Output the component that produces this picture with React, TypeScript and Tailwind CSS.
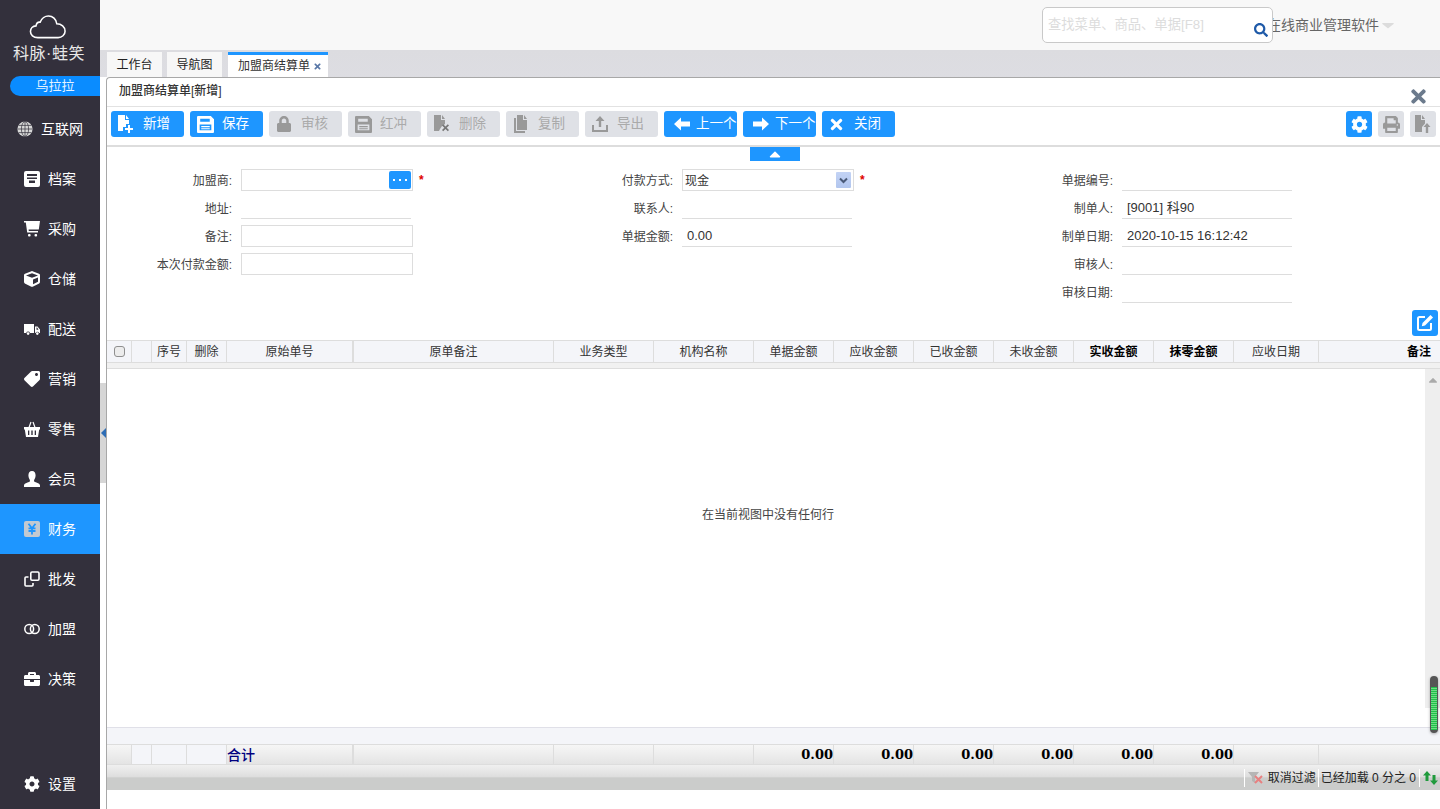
import type { ReactNode } from "react";
import { FaCube, FaTag, FaBriefcase, FaCog, FaLock, FaTimes, FaPrint, FaSearch, FaCaretDown, FaCaretUp } from "react-icons/fa";

const GlobeIcon = () => (
  <svg width="16" height="16" viewBox="0 0 16 16" fill="none">
    <circle cx="8" cy="8" r="7.6" fill="#d8d8d8" />
    <ellipse cx="8" cy="8" rx="3.6" ry="7.4" stroke="#33303c" strokeWidth="0.7" />
    <path d="M8 .6v14.8M.6 8h14.8M1.6 4.4h12.8M1.6 11.6h12.8" stroke="#33303c" strokeWidth="0.7" />
  </svg>
);

const ArchiveIcon = () => (
  <svg width="16" height="16" viewBox="0 0 16 16">
    <path
      fill="#fff"
      fillRule="evenodd"
      d="M2 0h12a2 2 0 0 1 2 2v12a2 2 0 0 1-2 2H2a2 2 0 0 1-2-2V2a2 2 0 0 1 2-2zM3 3v2h10V3zm0 3.5V8h10V6.500zM5 9.500V12h6V9.500z"
    />
  </svg>
);

const CartIcon = () => (
  <svg width="16" height="16" viewBox="0 0 16 16" fill="#fff">
    <path d="M0 0h16l-1.2 8.500H4.600l.2 1.500H14v1.600H3.200L1.800 1.600H0z" />
    <rect x="4" y="13" width="2.600" height="2.600" rx="1" />
    <rect x="10.500" y="13" width="2.600" height="2.600" rx="1" />
  </svg>
);

const TruckIcon = () => (
  <svg width="16" height="16" viewBox="0 0 16 16" fill="#fff">
    <path d="M0 3h10v9H6a2 2 0 0 0-3.800 0H0z" />
    <path fillRule="evenodd" d="M11 5.500h2.500L16 8.500V12h-.8a2 2 0 0 0-3.700 0H11zM12.500 6.500v2.200h2l-1.400-2.200z" />
    <circle cx="4.100" cy="12.600" r="1.300" />
    <circle cx="13.300" cy="12.600" r="1.300" />
  </svg>
);

const BasketIcon = () => (
  <svg width="16" height="16" viewBox="0 0 16 16">
    <path d="M5 6.500 7 1M11 6.500 9 1" fill="none" stroke="#fff" strokeWidth="1.200" />
    <path
      fill="#fff"
      fillRule="evenodd"
      d="M0 6h16v2.500h-.8L14 16H2L.8 8.500H0zM4 9.500V14h1.300V9.500zM7.300 9.500V14h1.400V9.500zM10.700 9.500V14H12V9.500z"
    />
  </svg>
);

const UserIcon = () => (
  <svg width="16" height="16" viewBox="0 0 16 16" fill="#fff">
    <path d="M8 0c2.500 0 3.600 2 3.600 4.500S10 8.500 10 10c0 1.500 6 1.800 6 4.500V16H0v-1.500C0 11.800 6 11.500 6 10 6 8.500 4.400 7 4.400 4.500S5.500 0 8 0z" />
  </svg>
);

const YenIcon = () => (
  <svg width="16" height="16" viewBox="0 0 16 16">
    <rect width="16" height="16" rx="2" fill="#c2c9d1" />
    <path d="M4.500 2.800 8 7.200l3.500-4.400M4.500 7.400h7M4.500 10h7M8 7.200v6.400" fill="none" stroke="#1e96ff" strokeWidth="1.800" />
  </svg>
);

const BatchIcon = () => (
  <svg width="16" height="16" viewBox="0 0 16 16" fill="none" stroke="#fff" strokeWidth="1.600">
    <rect x="6.800" y="1" width="8.200" height="8.200" rx="1.200" />
    <path d="M4.500 6H2a1 1 0 0 0-1 1v7a1 1 0 0 0 1 1h6a1 1 0 0 0 1-1v-2" />
  </svg>
);

const RingsIcon = () => (
  <svg width="16" height="16" viewBox="0 0 16 16" fill="none" stroke="#fff" strokeWidth="1.500">
    <circle cx="5.200" cy="8" r="4.400" />
    <circle cx="10.800" cy="8" r="4.400" />
  </svg>
);

const FilePlusIcon = () => (
  <svg width="18" height="18" viewBox="0 0 18 18" fill="#fff">
    <path d="M1 0h7v5h4v4H9v3H6v4H1z" />
    <path d="M9 0l3 4H9z" />
    <path d="M11 10h2v3h3v2h-3v3h-2v-3H8v-2h3z" />
  </svg>
);

const FileXIcon = () => (
  <svg width="18" height="18" viewBox="0 0 18 18" fill="#999">
    <path d="M1 0h7v5h4v4l-3 2-2 3-1 2H1z" />
    <path d="M9 0l3 4H9z" />
    <path d="M9 10.500l1.200-1.200 2.300 2.300 2.300-2.300 1.200 1.200-2.300 2.300 2.300 2.300-1.200 1.200-2.300-2.300-2.300 2.300L9 15.100l2.300-2.300z" fill="#777" />
  </svg>
);

const SaveIcon = ({ color }: { color: string }) => (
  <svg width="17" height="17" viewBox="0 0 16 16">
    <path
      fill={color}
      fillRule="evenodd"
      d="M1 0h12l3 3v12a1 1 0 0 1-1 1H1a1 1 0 0 1-1-1V1a1 1 0 0 1 1-1zM3 2.500V5.500h9V2.500zM2.500 8v5.500h11V8zM4 9.500h8v1H4zM4 11.500h8v1H4z"
    />
  </svg>
);

const CopyIcon = () => (
  <svg width="16" height="18" viewBox="0 0 16 18" fill="#999">
    <path d="M4 0h6v5h4v10H4z" />
    <path d="M11 0l3 4h-3z" />
    <path d="M1 3h2v13h9v2H1z" />
  </svg>
);

const UploadIcon = () => (
  <svg width="18" height="18" viewBox="0 0 18 18" fill="#999">
    <path d="M9 1l4.500 5H10.200v6H7.800V6H4.500z" />
    <path d="M1 10h2v5h12v-5h2v7H1z" />
  </svg>
);

const ArrowLeft = () => (
  <svg width="16" height="14" viewBox="0 0 16 14" fill="#fff" className="ml-[6px]">
    <path d="M0 7 7 .5v4h9v5H7v4z" />
  </svg>
);

const ArrowRight = () => (
  <svg width="16" height="14" viewBox="0 0 16 14" fill="#fff" className="ml-[6px]">
    <path d="M16 7 9 .5v4H0v5h9v4z" />
  </svg>
);

const FileUpIcon = () => (
  <svg width="18" height="18" viewBox="0 0 18 18" fill="#999">
    <path d="M1 0h6v5h4v3.500L8 12v5H1z" />
    <path d="M8 0l3 4H8z" />
    <path d="M13 8l3.500 4h-2.300v6h-2.400v-6H9.500z" />
  </svg>
);

const EditIcon = () => (
  <svg width="18" height="18" viewBox="0 0 18 18" fill="none">
    <path d="M9 3H3.500A1.500 1.500 0 0 0 2 4.500v10A1.500 1.500 0 0 0 3.500 16h10a1.500 1.500 0 0 0 1.500-1.500V9" stroke="#fff" strokeWidth="2" />
    <path d="M14.500 1 17 3.500 9 11.500l-3.200.7.700-3.200z" fill="#fff" />
  </svg>
);

const CloudLogo = () => (
  <svg width="38" height="24" viewBox="0 0 40 26" fill="none" stroke="#fff" strokeWidth="1.700" className="mr-[4px]">
    <path d="M9 24.500C4 24.500 1 21.500 1 18c0-3.500 2.500-6 6-6.200C7.500 9 9.500 7.500 11.500 7.800 13 3.500 17 1 20.500 1c4.500 0 8.500 3.500 9 8.500 5 0 9 3.500 9 8 0 4-3.500 7-7.500 7z" />
  </svg>
);

const menu: { label: string; icon: ReactNode; active?: boolean; wide?: boolean }[] = [
  { label: "互联网", icon: <GlobeIcon />, wide: true },
  { label: "档案", icon: <ArchiveIcon /> },
  { label: "采购", icon: <CartIcon /> },
  { label: "仓储", icon: <FaCube size={16} color="#fff" /> },
  { label: "配送", icon: <TruckIcon /> },
  { label: "营销", icon: <FaTag size={16} color="#fff" className="-scale-x-100" /> },
  { label: "零售", icon: <BasketIcon /> },
  { label: "会员", icon: <UserIcon /> },
  { label: "财务", icon: <YenIcon />, active: true },
  { label: "批发", icon: <BatchIcon /> },
  { label: "加盟", icon: <RingsIcon /> },
  { label: "决策", icon: <FaBriefcase size={16} color="#fff" /> },
];

const MenuItem = ({ label, icon, active, wide }: { label: string; icon: ReactNode; active?: boolean; wide?: boolean }) => (
  <div
    className={`flex h-[50px] items-center gap-[8px] text-[14px] text-white ${wide ? "pl-[17px]" : "pl-[24px]"} ${
      active ? "bg-[#1e96ff]" : ""
    }`}
  >
    <span className="flex h-[16px] w-[16px] items-center justify-center">{icon}</span>
    <span className="leading-none">{label}</span>
  </div>
);

const Sidebar = () => (
  <aside className="flex w-[100px] shrink-0 flex-col bg-[#33303c]">
    <div className="flex h-[76px] flex-col items-center pt-[15px]">
      <CloudLogo />
      <div className="mr-[2px] mt-[5px] whitespace-nowrap text-[16px] leading-[20px] tracking-[0.5px] text-[#e8e8e8]">科脉·蛙笑</div>
    </div>
    <div className="ml-[10px] flex h-[20px] items-center justify-center rounded-l-[10px] bg-[#0a8cff] text-[13px] text-[#e6f3ff]">乌拉拉</div>
    <div className="mt-[8px] flex-1">
      {menu.map((m) => (
        <MenuItem key={m.label} {...m} />
      ))}
    </div>
    <MenuItem label="设置" icon={<FaCog size={16} color="#fff" />} />
  </aside>
);

const TopBar = () => (
  <div className="flex h-[50px] shrink-0 items-center justify-end bg-[#f8f8f8] pr-[44px]">
    <div className="relative z-10 -mr-[6px] flex h-[36px] w-[231px] items-center rounded-[5px] border border-[#c9c9c9] bg-white pl-[5px] text-[13.300px] text-[#dcdcdc]">
      查找菜单、商品、单据[F8]
      <FaSearch size={14} color="#1f5aa8" className="absolute right-[4px] top-[15px]" />
    </div>
    <span className="whitespace-nowrap text-[14px] text-[#666]">在线商业管理软件</span>
    <FaCaretDown size={16} color="#dcdcdc" className="ml-[1px] scale-x-125" />
  </div>
);

const TabStrip = () => (
  <div className="flex h-[27px] shrink-0 items-end bg-gradient-to-b from-[#dcdce0] to-[#dddde2] pl-[7px] text-[12px]">
    <div className="flex h-[25px] w-[55px] items-center justify-center bg-[#f7f7f7] text-[#222]">工作台</div>
    <div className="ml-[5px] flex h-[25px] w-[55px] items-center justify-center bg-[#f7f7f7] text-[#222]">导航图</div>
    <div className="ml-[6px] flex h-[25px] w-[100px] items-center gap-[3px] border-t-[3px] border-[#1e96ff] bg-white pl-[10px] text-[#333]">
      加盟商结算单
      <FaTimes size={9} color="#5a78a8" />
    </div>
  </div>
);

type ToolButton = { label: string; icon: ReactNode; on?: boolean };

const tools: ToolButton[] = [
  { label: "新增", icon: <FilePlusIcon />, on: true },
  { label: "保存", icon: <SaveIcon color="#fff" />, on: true },
  { label: "审核", icon: <FaLock size={16} color="#999" /> },
  { label: "红冲", icon: <SaveIcon color="#999" /> },
  { label: "删除", icon: <FileXIcon /> },
  { label: "复制", icon: <CopyIcon /> },
  { label: "导出", icon: <UploadIcon /> },
  { label: "上一个", icon: <ArrowLeft />, on: true },
  { label: "下一个", icon: <ArrowRight />, on: true },
  { label: "关闭", icon: <FaTimes size={17} color="#fff" className="mr-[2px]" />, on: true },
];

const Toolbar = () => (
  <div className="flex h-[40px] shrink-0 items-start border-b-[2px] border-[#dddddd] pl-[4px] pt-[4px]">
    <div className="flex gap-[6px]">
      {tools.map((t) => (
        <div
          key={t.label}
          className={`flex h-[26px] w-[73px] items-center overflow-hidden whitespace-nowrap rounded-[3px] text-[13.500px] ${
            t.on ? "bg-[#1e96ff] text-white" : "bg-[#dfe1e6] text-[#aaaaaa]"
          }`}
        >
          <span className="flex w-[32px] shrink-0 items-center justify-center pr-[2px]">{t.icon}</span>
          {t.label}
        </div>
      ))}
    </div>
    <div className="ml-auto flex gap-[6px] pr-[4px]">
      <div className="flex h-[26px] w-[26px] items-center justify-center rounded-[3px] bg-[#1e96ff]">
        <FaCog size={17} color="#fff" />
      </div>
      <div className="flex h-[26px] w-[26px] items-center justify-center rounded-[3px] bg-[#dfe1e6]">
        <FaPrint size={17} color="#999" />
      </div>
      <div className="flex h-[26px] w-[26px] items-center justify-center rounded-[3px] bg-[#dfe1e6]">
        <FileUpIcon />
      </div>
    </div>
  </div>
);

const Label = ({ children }: { children: ReactNode }) => (
  <span className="w-[127px] shrink-0 whitespace-nowrap pr-[2px] pt-[1px] text-right text-[#444]">{children}:</span>
);

const Star = () => <span className="ml-[6px] text-[12px] font-bold leading-none text-[#e00000]">*</span>;

const LineField = ({ label, value }: { label: string; value?: string }) => (
  <div className="flex h-[22px] items-center">
    <Label>{label}</Label>
    <div className="ml-[7px] flex h-[22px] w-[170px] items-center border-b border-[#dddddd] pl-[5px] pt-[1px] text-[13px] text-[#333]">{value}</div>
  </div>
);

const BoxField = ({ label }: { label: string }) => (
  <div className="flex h-[22px] items-center">
    <Label>{label}</Label>
    <div className="ml-[7px] h-[22px] w-[172px] border border-[#dddddd]" />
  </div>
);

const FormArea = () => (
  <div className="h-[193px] shrink-0">
    <div className="ml-[643px] flex h-[14px] w-[50px] items-center justify-center bg-[#1e96ff]">
      <FaCaretUp size={18} color="#fff" />
    </div>
    <div className="flex pt-[8px] text-[12px]">
      <div className="flex w-[441px] flex-col gap-[6px]">
        <div className="flex h-[22px] items-center">
          <Label>加盟商</Label>
          <div className="ml-[7px] flex h-[22px] w-[172px] items-center justify-end border border-[#dddddd] pr-[1px]">
            <div className="flex h-[18px] w-[22px] items-center justify-center gap-[4px] rounded-[2px] bg-[#1e96ff]">
              <i className="h-[2px] w-[2px] bg-white" />
              <i className="h-[2px] w-[2px] bg-white" />
              <i className="h-[2px] w-[2px] bg-white" />
            </div>
          </div>
          <Star />
        </div>
        <LineField label="地址" />
        <BoxField label="备注" />
        <BoxField label="本次付款金额" />
      </div>
      <div className="flex w-[440px] flex-col gap-[6px]">
        <div className="flex h-[22px] items-center">
          <Label>付款方式</Label>
          <div className="ml-[7px] flex h-[22px] w-[172px] items-center justify-between border border-[#dddddd] pl-[2px] pr-[2px] text-[#333]">
            <span className="pt-[1px]">现金</span>
            <div className="flex h-[16px] w-[15px] items-center justify-center rounded-[1px] bg-gradient-to-b from-[#c3d3f5] to-[#b2c6ee]">
              <svg width="9" height="7" viewBox="0 0 9 7" fill="none" stroke="#4a5a78" strokeWidth="2">
                <path d="M1 1.500l3.500 3.500L8 1.500" />
              </svg>
            </div>
          </div>
          <Star />
        </div>
        <LineField label="联系人" />
        <LineField label="单据金额" value="0.00" />
      </div>
      <div className="flex flex-col gap-[6px]">
        <LineField label="单据编号" />
        <LineField label="制单人" value="[9001] 科90" />
        <LineField label="制单日期" value="2020-10-15 16:12:42" />
        <LineField label="审核人" />
        <LineField label="审核日期" />
      </div>
    </div>
    <div className="flex justify-end pr-[2px] pt-[7px]">
      <div className="flex h-[26px] w-[26px] items-center justify-center rounded-[3px] bg-[#1e96ff]">
        <EditIcon />
      </div>
    </div>
  </div>
);

const cols: { w: string; label?: string; strong?: boolean; total?: boolean; right?: boolean; thick?: boolean }[] = [
  { w: "w-[25px]" },
  { w: "w-[20px]" },
  { w: "w-[35px]", label: "序号" },
  { w: "w-[40px]", label: "删除" },
  { w: "w-[127px]", label: "原始单号", thick: true },
  { w: "w-[200px]", label: "原单备注" },
  { w: "w-[100px]", label: "业务类型" },
  { w: "w-[100px]", label: "机构名称" },
  { w: "w-[80px]", label: "单据金额", total: true },
  { w: "w-[80px]", label: "应收金额", total: true },
  { w: "w-[80px]", label: "已收金额", total: true },
  { w: "w-[80px]", label: "未收金额", total: true },
  { w: "w-[80px]", label: "实收金额", strong: true, total: true },
  { w: "w-[80px]", label: "抹零金额", strong: true, total: true },
  { w: "w-[85px]", label: "应收日期" },
  { w: "flex-1", label: "备注", strong: true, right: true },
];

const GridHeader = () => (
  <div className="flex h-[23px] shrink-0 border-y border-[#dddddd] bg-[#f4f5f9] text-[12px]">
    {cols.map((c, i) => (
      <div
        key={i}
        className={`flex items-center ${c.w} ${c.right ? "justify-end pr-[9px]" : "justify-center"} ${
          c.thick ? "border-r-[2px]" : i === cols.length - 1 ? "" : "border-r"
        } border-[#dddddd] ${c.strong ? "font-bold text-black" : "text-[#333]"}`}
      >
        {i === 0 ? <span className="h-[11px] w-[11px] rounded-[3px] border border-[#8f8f8f] bg-[#ececec]" /> : c.label}
      </div>
    ))}
  </div>
);

const GridBody = () => (
  <div className="relative flex min-h-0 flex-1">
    <div className="flex-1 pl-[4px] pt-[137px] text-center text-[12px] text-[#444]">在当前视图中没有任何行</div>
    <div className="h-[339px] w-[15px] bg-[#eeeeee] pt-[1px]">
      <FaCaretUp size={14} color="#aaaaaa" className="mx-auto mt-[3px]" />
    </div>
    <div className="absolute right-[2px] top-[307px] flex h-[57px] w-[8px] flex-col rounded-[4px] bg-[#555] px-[1px] pb-[3px] pt-[11px] shadow-[0_1px_3px_rgba(0,0,0,0.3)]">
      <div className="flex-1 bg-[repeating-linear-gradient(#1fc24a_0,#1fc24a_1px,#6fdc85_1px,#6fdc85_2px)]" />
    </div>
  </div>
);

const GridFooter = () => (
  <>
    <div className="h-[17px] shrink-0 border-t border-[#e0e0e8] bg-[#f4f5f9]" />
    <div className="flex h-[21px] shrink-0 border-y border-[#dddddd] bg-gradient-to-b from-[#f6f6f6] to-[#e4e4e4]">
      {cols.map((c, i) => (
        <div
          key={i}
          className={`flex items-center ${c.w} ${c.thick ? "border-r-[2px]" : i === cols.length - 1 ? "" : "border-r"} border-[#dddddd] ${
            i > 0 && i < 4 ? "bg-[#f4f5f9]" : ""
          } ${c.total ? "justify-end" : ""}`}
        >
          {c.thick && <span className="pt-[1px] text-[14px] font-medium leading-none text-[#000080]">合计</span>}
          {c.total && <span className="font-['DejaVu_Serif',serif] text-[13px] font-bold leading-none text-black">0.00</span>}
        </div>
      ))}
    </div>
    <div className="flex h-[25px] shrink-0 items-center justify-end bg-[linear-gradient(#f0f0f0,#dedede_46%,#cbcccb_52%,#cbcccb)] text-[12px] text-[#222]">
      <div className="flex h-[18px] items-center border-l border-white pl-[3px]">
        <svg width="16" height="14" viewBox="0 0 16 14" className="mr-[4px]">
          <path d="M0 1h11L7 6v6L4 10V6z" fill="#b5b5b5" />
          <path d="M7 5l7 7M14 5l-7 7" stroke="#e88080" strokeWidth="2" />
        </svg>
        取消过滤
      </div>
      <div className="ml-[2px] flex h-[18px] items-center border-l border-white pl-[2px]">已经加载 0 分之 0</div>
      <div className="ml-[3px] flex h-[18px] w-[21px] items-center justify-center border-l border-white">
        <svg width="15" height="14" viewBox="0 0 15 14" fill="#1f9a3c">
          <path d="M4 0 0 4.500h2.500V10h3V4.500H8z" />
          <path d="M11 14l4-4.500h-2.500V4h-3v5.500H7z" />
        </svg>
      </div>
    </div>
    <div className="h-[19px] shrink-0 bg-white" />
  </>
);

const Panel = () => (
  <div className="flex min-w-0 flex-1 flex-col rounded-tl-[4px] border-l border-t border-[#a8a8a8] bg-white">
    <div className="flex h-[29px] shrink-0 items-center justify-between border-b border-[#e2e2e2] pl-[12px] pr-[11px]">
      <span className="pb-[2px] text-[12px] font-medium text-[#333]">加盟商结算单[新增]</span>
      <FaTimes size={21} color="#6b7a8c" className="mt-[8px]" />
    </div>
    <Toolbar />
    <FormArea />
    <GridHeader />
    <div className="h-[6px] shrink-0 border-b border-[#dddddd] bg-[#f1f1f1]" />
    <GridBody />
    <GridFooter />
  </div>
);

const App = () => (
  <div className="flex h-[809px] w-[1440px] overflow-hidden bg-white font-['Liberation_Sans','Noto_Sans_CJK_SC',sans-serif]">
    <Sidebar />
    <main className="flex min-w-0 flex-1 flex-col">
      <TopBar />
      <TabStrip />
      <div className="flex min-h-0 flex-1">
        <div className="flex w-[6px] shrink-0 flex-col bg-white pt-[306px]">
          <div className="flex h-[100px] items-center bg-[#d6d6d6]">
            <svg width="5" height="10" viewBox="0 0 5 10" className="ml-[1px]">
              <path d="M5 0v10L0 5z" fill="#2d6db5" />
            </svg>
          </div>
        </div>
        <Panel />
      </div>
    </main>
  </div>
);

export default App;
